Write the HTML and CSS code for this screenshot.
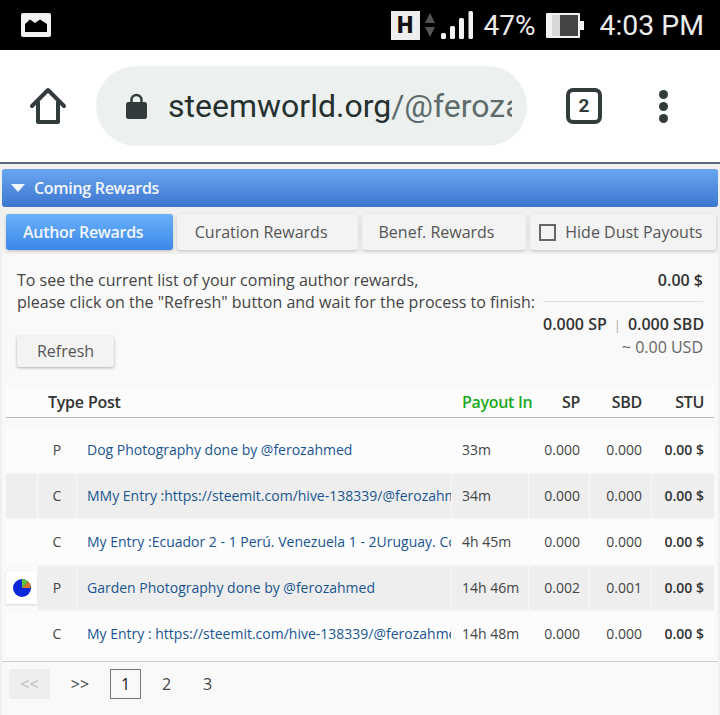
FILE: index.html
```html
<!DOCTYPE html>
<html>
<head>
<meta charset="UTF-8"/>
<title>Coming Rewards</title>
<link rel="stylesheet" href="styles.css">
</head>
<body>
<div class="status-bar">
	<svg class="st-pic" width="30" height="24" viewBox="0 0 30 24"><rect width="30" height="24" rx="2" fill="#f2f2f2"/><path d="M4 19V11L9 6.5L14 10L19 6.5L26 11V19Z" fill="#000"/></svg>
	<div class="st-right">
		<span class="st-h">H</span>
		<svg class="st-arrows" width="10" height="24" viewBox="0 0 10 24"><path d="M5 0L10 10H0Z" fill="#555"/><path d="M5 24L10 14H0Z" fill="#555"/></svg>
		<svg class="st-signal" width="32" height="28" viewBox="0 0 32 28"><rect x="0" y="22" width="5" height="6" rx="1.5" fill="#f2f2f2"/><rect x="9" y="15" width="5" height="13" rx="1.5" fill="#f2f2f2"/><rect x="18" y="7" width="5" height="21" rx="1.5" fill="#f2f2f2"/><rect x="27.5" y="0" width="4.5" height="28" rx="1.5" fill="#f2f2f2"/></svg>
		<span class="st-pct">47%</span>
		<svg class="st-batt" width="38" height="25" viewBox="0 0 38 25"><rect width="34" height="25" rx="1" fill="#f2f2f2"/><rect x="6" y="2" width="8" height="21" fill="#d8d8d8"/><rect x="14" y="2" width="18" height="21" fill="#444"/><rect x="34" y="8" width="4" height="9" fill="#f2f2f2"/></svg>
		<span class="st-time">4:03 PM</span>
	</div>
</div>

<div class="browser-bar">
	<svg class="home-icon" width="38" height="38" viewBox="0 0 38 38"><path d="M3 19L19 3L35 19M9 15V35H29V15" fill="none" stroke="#323c3c" stroke-width="4" stroke-linejoin="round" stroke-linecap="round"/></svg>
	<div class="url-pill">
		<svg class="lock" width="21" height="26" viewBox="0 0 21 26"><path d="M5.5 10V7a5 5 0 0 1 10 0v3" fill="none" stroke="#323c3c" stroke-width="2.4"/><rect y="9" width="21" height="17" rx="2.5" fill="#323c3c"/></svg>
		<div class="url-text">steemworld.org<span class="url-path">/@feroza</span></div>
	</div>
	<div class="tab-count">2</div>
	<div class="menu-dots"><i></i><i></i><i></i></div>
</div>

<div class="page">
	<div class="sec-head"><span class="sec-arrow"></span>Coming Rewards</div>

	<div class="tabs">
		<a class="tab tab-on">Author Rewards</a>
		<a class="tab tab-cur">Curation Rewards</a>
		<a class="tab tab-ben">Benef. Rewards</a>
		<label class="tab tab-hide"><span class="checkbox"></span>Hide Dust Payouts</label>
	</div>

	<div class="panel">
		<div class="intro">
			<div class="intro-text">
				<p>To see the current list of your coming author rewards,<br/>please click on the "Refresh" button and wait for the process to finish:</p>
				<a class="btn-refresh">Refresh</a>
			</div>
			<div class="totals">
				<div class="tot-main">0.00 $</div>
				<div class="tot-line"><b>0.000 SP</b><span class="sep">|</span><b>0.000 SBD</b></div>
				<div class="tot-usd">~ 0.00 USD</div>
			</div>
		</div>

		<div class="list">
			<div class="row row-head">
				<div></div>
				<div class="c-type">Type</div>
				<div class="c-post">Post</div>
				<div class="c-time green">Payout In</div>
				<div class="c-num">SP</div>
				<div class="c-num">SBD</div>
				<div class="c-num">STU</div>
			</div>
			<div class="row">
				<div></div><div class="c-type">P</div>
				<div class="c-post"><a>Dog Photography done by @ferozahmed</a></div>
				<div class="c-time">33m</div><div class="c-num">0.000</div><div class="c-num">0.000</div><div class="c-num c-stu">0.00 $</div>
			</div>
			<div class="row row-alt">
				<div></div><div class="c-type">C</div>
				<div class="c-post"><a>MMy Entry :https://steemit.com/hive-138339/@ferozahmed</a></div>
				<div class="c-time">34m</div><div class="c-num">0.000</div><div class="c-num">0.000</div><div class="c-num c-stu">0.00 $</div>
			</div>
			<div class="row">
				<div></div><div class="c-type">C</div>
				<div class="c-post"><a>My Entry :Ecuador 2 - 1 Perú. Venezuela 1 - 2Uruguay. Colombia</a></div>
				<div class="c-time">4h 45m</div><div class="c-num">0.000</div><div class="c-num">0.000</div><div class="c-num c-stu">0.00 $</div>
			</div>
			<div class="row row-alt">
				<div class="c-pie"><span class="pie-box"><svg width="18" height="18" viewBox="0 0 18 18"><circle cx="9" cy="9" r="9" fill="#0a28d8"/><path d="M9 9V0A9 9 0 0 1 15.4 2.6Z" fill="#5cc63c"/><path d="M9 9L15.4 2.6A9 9 0 0 1 18 9Z" fill="#d8782c"/></svg></span></div>
				<div class="c-type">P</div>
				<div class="c-post"><a>Garden Photography done by @ferozahmed</a></div>
				<div class="c-time">14h 46m</div><div class="c-num">0.002</div><div class="c-num">0.001</div><div class="c-num c-stu">0.00 $</div>
			</div>
			<div class="row">
				<div></div><div class="c-type">C</div>
				<div class="c-post"><a>My Entry : https://steemit.com/hive-138339/@ferozahmed</a></div>
				<div class="c-time">14h 48m</div><div class="c-num">0.000</div><div class="c-num">0.000</div><div class="c-num c-stu">0.00 $</div>
			</div>
		</div>

		<div class="pager">
			<a class="pg pg-off">&lt;&lt;</a>
			<a class="pg pg-next">&gt;&gt;</a>
			<a class="pg pg-cur">1</a>
			<a class="pg pg-num pg-two">2</a>
			<a class="pg pg-num">3</a>
		</div>
	</div>
</div>
</body>
</html>
```

FILE: styles.css
```css
html, body{
	margin:0;
	padding:0;
	background:#f0f0ee;
}
body{
	width:720px;
	height:715px;
	overflow:hidden;
	font-family:"Open Sans", "Liberation Sans", sans-serif;
	font-size:14px;
	color:#444;
}

/* phone status bar */
.status-bar{
	height:50px;
	background:#000;
	display:flex;
	align-items:center;
	justify-content:space-between;
	padding:0 16px 0 21px;
	box-sizing:border-box;
	font-family:Roboto, sans-serif;
	color:#ececec;
}
.st-right{
	display:flex;
	align-items:center;
}
.st-h{
	width:29px;
	height:29px;
	background:#eee;
	color:#111;
	font-weight:900;
	font-size:23px;
	line-height:29px;
	text-align:center;
}
.st-arrows{margin-left:5px;}
.st-signal{margin-left:6px;}
.st-pct{
	font-size:28px;
	margin-left:11px;
}
.st-batt{margin-left:10px;}
.st-time{
	font-size:28.4px;
	margin-left:16px;
}

/* browser toolbar */
.browser-bar{
	height:114px;
	background:#fff;
	border-bottom:2px solid #5a6a78;
	box-sizing:border-box;
	display:flex;
	align-items:center;
	padding:0 0 0 29px;
}
.home-icon{flex:none;}
.url-pill{
	width:431px;
	height:80px;
	margin-left:29px;
	border-radius:40px;
	background:#ecf1ef;
	display:flex;
	align-items:center;
	padding:0 15px 0 30px;
	box-sizing:border-box;
	flex:none;
}
.lock{flex:none;}
.url-text{
	margin-left:21px;
	font-family:Roboto, sans-serif;
	font-size:32px;
	color:#26302f;
	white-space:nowrap;
	overflow:hidden;
	flex:1;
}
.url-path{color:#5f6b6b;}
.tab-count{
	width:36px;
	height:36px;
	margin-left:39px;
	border:4px solid #323c3c;
	border-radius:7px;
	box-sizing:border-box;
	font-family:Roboto, sans-serif;
	font-weight:700;
	font-size:19px;
	line-height:28px;
	text-align:center;
	color:#323c3c;
	flex:none;
}
.menu-dots{
	margin-left:57px;
	display:flex;
	flex-direction:column;
	gap:3px;
}
.menu-dots i{
	display:block;
	width:9px;
	height:9px;
	border-radius:50%;
	background:#323c3c;
}

/* page */
.page{
	padding:5px 2px 0;
}
.sec-head{
	height:38px;
	border-radius:3px;
	background:linear-gradient(#6aa6f0, #3c76d0);
	color:#f2f6fc;
	font-weight:600;
	font-size:16px;
	letter-spacing:-0.3px;
	line-height:37px;
	display:flex;
	align-items:center;
	padding-left:9px;
}
.sec-arrow{
	width:0;
	height:0;
	border-left:7px solid transparent;
	border-right:7px solid transparent;
	border-top:8px solid #f2f6fc;
	margin-right:9px;
}
.tabs{
	display:flex;
	gap:4px;
	padding:7px 2px 0 4px;
}
.tab{
	height:36px;
	line-height:36px;
	border-radius:3px;
	background:#f3f3f3;
	box-shadow:0 1px 3px rgba(0,0,0,.2);
	padding-left:17px;
	font-size:16px;
	color:#555;
	box-sizing:border-box;
}
.tab-on{
	width:167px;
	background:linear-gradient(#6ab0fa, #3c88ea);
	color:#f2f6fc;
	font-weight:600;
	letter-spacing:-0.3px;
}
.tab-cur{width:181px;padding-left:18px;}
.tab-ben{width:165px;}
.tab-hide{
	width:186px;
	display:flex;
	align-items:center;
	padding-left:9px;
}
.checkbox{
	width:13px;
	height:13px;
	border:2px solid #666;
	margin-right:9px;
	flex:none;
}
.panel{
	margin-top:4px;
	background:#f9f9f9;
	height:461px;
	overflow:hidden;
}
.intro{
	display:flex;
	justify-content:space-between;
	padding:15px 15px 0 15px;
	height:133px;
	box-sizing:border-box;
}
.intro p{
	margin:0;
	font-size:16px;
	line-height:22px;
	color:#444;
	white-space:nowrap;
}
.btn-refresh{
	display:block;
	width:97px;
	height:31px;
	line-height:31px;
	margin-top:23px;
	background:#f3f3f3;
	border-radius:2px;
	box-shadow:0 1px 3px rgba(0,0,0,.3);
	text-align:center;
	font-size:16px;
	color:#555;
}
.totals{
	width:160px;
	flex:none;
	text-align:right;
	font-size:16px;
	line-height:22px;
}
.tot-main{
	font-weight:600;
	color:#333;
	padding-bottom:10px;
	border-bottom:1px solid #ddd;
	margin-bottom:11px;
}
.tot-line{white-space:nowrap;}
.tot-line b{
	font-weight:600;
	color:#333;
}
.sep{
	margin:0 7px;
	color:#aaa;
	font-size:13px;
}
.tot-usd{color:#666;}

/* list */
.list{
	display:flex;
	flex-direction:column;
	gap:2px;
	padding:0 4px;
}
.row{
	display:grid;
	grid-template-columns:31px 38px 374px 76px 60px 61px 62px;
	gap:1px;
	height:44px;
	line-height:43px;
	font-size:14px;
}
.row > div{
	background:#fcfcfc;
	white-space:nowrap;
	overflow:hidden;
}
.row-alt > div{background:#eeeeee;}
.row > .c-pie{
	background:#f9f9f9;
	overflow:visible;
}
.row-head{
	height:30px;
	line-height:30px;
	margin-bottom:8px;
	font-size:16px;
	font-weight:600;
	color:#333;
	letter-spacing:-0.3px;
	background:#fcfcfc;
	border-bottom:1px solid #bbb;
}
.row-head > div{
	background:none;
	overflow:visible;
}
.c-type{
	text-align:center;
}
.c-post{
	padding-left:10px;
}
.c-post a{
	color:#1a5590;
}
.row-head .c-post{padding-left:11px;}
.row-head .c-type{text-align:left;padding-left:10px;}
.c-time{
	padding-left:10px;
}
.c-num{
	text-align:right;
	padding-right:9px;
}
.c-stu{
	font-weight:600;
	color:#333;
	padding-right:10px;
}
.row-head .c-num:last-child{padding-right:10px;}
.green{color:#1ca81c;}
.pie-box{
	display:flex;
	width:31px;
	height:32px;
	margin-top:6px;
	align-items:center;
	justify-content:center;
	background:#fff;
	box-shadow:0 1px 2px rgba(0,0,0,.15);
}

/* pager */
.pager{
	margin-top:5px;
	border-top:1px solid #ccc;
	display:flex;
	align-items:center;
	padding:7px 0 0 7px;
}
.pg{
	height:30px;
	line-height:30px;
	text-align:center;
	font-size:16px;
	color:#444;
	box-sizing:border-box;
}
.pg-off{
	width:41px;
	background:#eee;
	color:#bbb;
}
.pg-next{
	width:60px;
}
.pg-cur{
	width:31px;
	border:1px solid #777;
	line-height:28px;
	color:#222;
}
.pg-num{width:41px;}
.pg-two{margin-left:5px;}
```
